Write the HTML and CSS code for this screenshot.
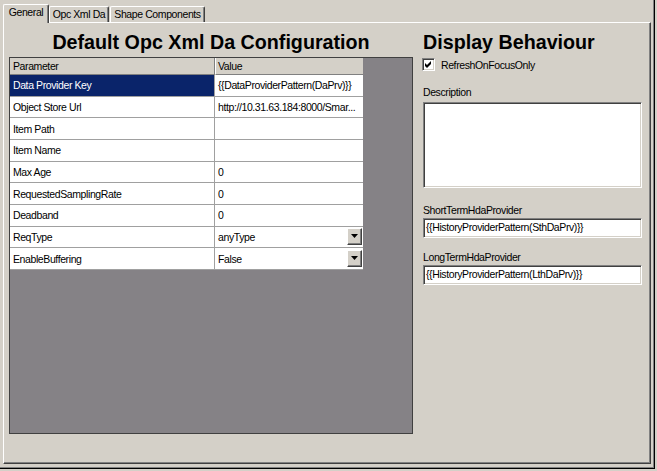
FILE: index.html
```html
<!DOCTYPE html>
<html>
<head>
<meta charset="utf-8">
<link rel="stylesheet" href="styles.css">
</head>
<body>
<div class="window">
  <div class="tabs">
    <div class="tab active">General</div>
    <div class="tab opc">Opc Xml Da</div>
    <div class="tab shape">Shape Components</div>
  </div>
  <div class="panel">
    <div class="left">
      <h1 class="title">Default Opc Xml Da Configuration</h1>
      <div class="workspace">
        <div class="grid">
          <div class="hcell param">Parameter</div><div class="hcell value">Value</div>
          <div class="cell param sel">Data Provider Key</div><div class="cell value">{{DataProviderPattern(DaPrv)}}</div>
          <div class="cell param">Object Store Url</div><div class="cell value">http://10.31.63.184:8000/Smar...</div>
          <div class="cell param">Item Path</div><div class="cell value"></div>
          <div class="cell param">Item Name</div><div class="cell value"></div>
          <div class="cell param">Max Age</div><div class="cell value">0</div>
          <div class="cell param">RequestedSamplingRate</div><div class="cell value">0</div>
          <div class="cell param">Deadband</div><div class="cell value">0</div>
          <div class="cell param">ReqType</div><div class="cell value"><span>anyType</span><span class="dd"><svg width="7" height="4" viewBox="0 0 7 4"><polygon points="0,0 7,0 3.5,4" fill="#000"/></svg></span></div>
          <div class="cell param">EnableBuffering</div><div class="cell value"><span>False</span><span class="dd"><svg width="7" height="4" viewBox="0 0 7 4"><polygon points="0,0 7,0 3.5,4" fill="#000"/></svg></span></div>
        </div>
      </div>
    </div>
    <div class="right">
      <h1 class="title rtitle">Display Behaviour</h1>
      <div class="check-row">
        <span class="checkbox"><svg width="7" height="7" viewBox="0 0 7 7"><polygon points="0,2 2,4 6,0 6,3 2,7 0,5" fill="#000"/></svg></span>
        <span class="check-label">RefreshOnFocusOnly</span>
      </div>
      <div class="label desc-label">Description</div>
      <div class="textbox textarea"></div>
      <div class="label short-label">ShortTermHdaProvider</div>
      <div class="textbox single">{{HistoryProviderPattern(SthDaPrv)}}</div>
      <div class="label long-label">LongTermHdaProvider</div>
      <div class="textbox single">{{HistoryProviderPattern(LthDaPrv)}}</div>
    </div>
  </div>
</div>
</body>
</html>
```
FILE: styles.css
```css
html, body {
  margin: 0;
  padding: 0;
  background: #d4d0c8;
}
body {
  width: 657px;
  height: 471px;
  overflow: hidden;
  font-family: "Liberation Sans", Arial, sans-serif;
  font-size: 10.5px;
  letter-spacing: -0.4px;
  color: #000;
}
.window {
  width: 655px;
  height: 469px;
  box-sizing: border-box;
  border-right: 1px solid #000;
  border-bottom: 1px solid #000;
  box-shadow: inset -1px -1px #808080;
  display: flex;
  flex-direction: column;
}
.tabs {
  height: 22px;
  display: flex;
  align-items: flex-end;
  padding-left: 3px;
  flex: none;
}
.tab {
  height: 16px;
  box-sizing: border-box;
  border-left: 1px solid #fff;
  border-top: 1px solid #fff;
  border-right: 1px solid #404040;
  box-shadow: inset -1px 0 #808080;
  border-radius: 2px 2px 0 0;
  text-align: center;
  line-height: 14px;
  white-space: nowrap;
  background: #d4d0c8;
}
.tab.active {
  width: 46px;
  height: 19px;
  margin-bottom: -1px;
  position: relative;
  z-index: 2;
  line-height: 15px;
}
.tab.opc {
  width: 60px;
}
.tab.shape {
  width: 95px;
  margin-left: 1px;
}
.panel {
  margin-left: 3px;
  width: 648px;
  height: 442px;
  box-sizing: border-box;
  border-top: 1px solid #fff;
  border-left: 1px solid #fff;
  border-right: 1px solid #404040;
  border-bottom: 1px solid #404040;
  box-shadow: inset -1px -1px #808080;
  display: flex;
  flex: none;
}
.left {
  margin-left: 5px;
  width: 404px;
  display: flex;
  flex-direction: column;
}
.title {
  margin: 0 0 3px 0;
  padding-top: 7px;
  height: 24px;
  font-family: "Liberation Sans", Arial, sans-serif;
  font-weight: bold;
  font-size: 19.7px;
  letter-spacing: 0;
  line-height: 24px;
  text-align: center;
  white-space: nowrap;
}
.workspace {
  height: 377px;
  box-sizing: border-box;
  border: 1px solid #404040;
  background: #858286;
}
.grid {
  display: grid;
  grid-template-columns: 205px 148px;
  grid-template-rows: 17px repeat(9, 21.67px);
}
.hcell {
  box-sizing: border-box;
  background: #d4d0c8;
  border-bottom: 1px solid #808080;
  display: flex;
  align-items: center;
  white-space: nowrap;
}
.hcell.param {
  border-right: 1px solid #808080;
  padding-left: 3px;
}
.hcell.value {
  border-left: 1px solid #fff;
  padding-left: 2px;
}
.cell {
  box-sizing: border-box;
  background: #fff;
  border-bottom: 1px solid #a0a0a0;
  display: flex;
  align-items: center;
  white-space: nowrap;
  overflow: hidden;
  padding-left: 3px;
}
.cell.param {
  border-right: 1px solid #a0a0a0;
}
.cell.sel {
  background: #0a246a;
  color: #fff;
}
.dd {
  margin-left: auto;
  margin-right: 1px;
  width: 15px;
  height: 17px;
  box-sizing: border-box;
  background: #d4d0c8;
  border: 1px solid;
  border-color: #fff #404040 #404040 #fff;
  box-shadow: inset -1px -1px #808080;
  display: flex;
  align-items: center;
  justify-content: center;
  padding-bottom: 1px;
}
.dd svg {
  display: block;
}
.right {
  margin-left: 9px;
  width: 221px;
  display: flex;
  flex-direction: column;
}
.rtitle {
  text-align: left;
  padding-left: 1px;
  margin-bottom: 4px;
}
.check-row {
  display: flex;
  align-items: center;
  height: 13px;
}
.checkbox {
  width: 13px;
  height: 13px;
  box-sizing: border-box;
  background: #fff;
  border: 1px solid;
  border-color: #808080 #fff #fff #808080;
  box-shadow: inset 1px 1px #404040, inset -1px -1px #d4d0c8;
  display: flex;
  align-items: center;
  justify-content: center;
}
.checkbox svg {
  display: block;
}
.check-label {
  margin-left: 6px;
  white-space: nowrap;
}
.label {
  margin-left: 1px;
  height: 13px;
  line-height: 13px;
  white-space: nowrap;
}
.desc-label {
  margin-top: 15px;
}
.short-label {
  margin-top: 16px;
}
.long-label {
  margin-top: 13px;
}
.textbox {
  margin-left: 1px;
  width: 219px;
  box-sizing: border-box;
  background: #fff;
  border: 1px solid;
  border-color: #808080 #fff #fff #808080;
  box-shadow: inset 1px 1px #404040, inset -1px -1px #d4d0c8;
  margin-top: 3px;
  white-space: nowrap;
  overflow: hidden;
}
.textarea {
  height: 86px;
}
.single {
  margin-top: 1px;
  height: 20px;
  line-height: 17px;
  padding-left: 2px;
}
```
